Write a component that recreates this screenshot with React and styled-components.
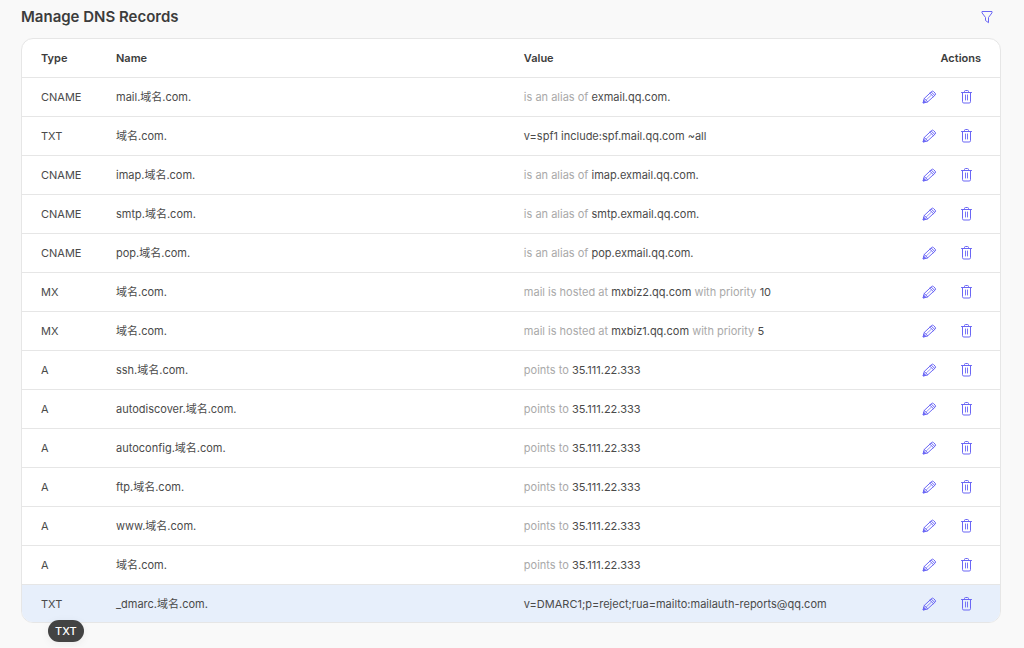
import React from "react";
import styled, { createGlobalStyle } from "styled-components";

const GlobalStyle = createGlobalStyle`
  *, *::before, *::after { box-sizing: border-box; }
  body {
    margin: 0;
    background: #f9f9f9;
    color: #4a4a4a;
    font-family: Inter, "Noto Sans CJK SC", sans-serif;
    font-size: 11px;
    line-height: 18px;
  }
`;

const Page = styled.main`
  padding: 5px 23px 24px 21px;
`;

const Header = styled.header`
  display: flex;
  align-items: center;
  justify-content: space-between;
  height: 24px;
  margin-bottom: 9px;
  padding-right: 6px;
`;

const Title = styled.h1`
  margin: 0;
  color: #3c3c3c;
  font-size: 15px;
  line-height: 24px;
  font-weight: 600;
`;

const IconButton = styled.button`
  display: inline-flex;
  align-items: center;
  justify-content: center;
  width: 16px;
  height: 16px;
  padding: 0;
  border: 0;
  background: transparent;
  color: #6a66f5;
  cursor: pointer;
`;

const Panel = styled.section`
  position: relative;
`;

const Card = styled.div`
  overflow: hidden;
  border: 1px solid #e6e6e6;
  border-radius: 12px;
  background: #fff;
`;

const Table = styled.table`
  width: 100%;
  table-layout: fixed;
  border-collapse: separate;
  border-spacing: 0;
`;

const TypeColumn = styled.col`
  width: 94px;
`;

const NameColumn = styled.col`
  width: 41.7%;
`;

const ActionsColumn = styled.col`
  width: 104px;
`;

const HeadCell = styled.th`
  height: 39px;
  padding: 0;
  border-bottom: 1px solid #e6e6e6;
  color: #3c3c3c;
  font-weight: 600;
  text-align: ${(p) => p.$align || "left"};

  &:first-child { padding-left: 19px; }
  &:last-child { padding-right: 19px; }
`;

const Row = styled.tr`
  background: ${(p) => (p.$active ? "#e7effb" : "#fff")};

  &:last-child > td {
    height: 37px;
    border-bottom: 0;
  }
`;

const Cell = styled.td`
  height: 39px;
  padding: 0;
  border-bottom: 1px solid #e6e6e6;
  white-space: nowrap;

  &:first-child { padding-left: 19px; }
`;

const Muted = styled.span`
  color: #a9a9a9;
`;

const Actions = styled.div`
  display: flex;
  justify-content: flex-end;
  gap: 21px;
  padding-right: 26px;
`;

const Tooltip = styled.div`
  position: absolute;
  top: calc(100% - 3px);
  left: 27px;
  padding: 2px 7px;
  border-radius: 11px;
  background: #434343;
  color: #fff;
  font-weight: 500;
  box-shadow: 0 2px 10px rgba(0, 0, 0, 0.06);
`;

function FilterIcon() {
  return (
    <svg width="16" height="16" viewBox="0 0 16 16" fill="none" stroke="currentColor" strokeLinejoin="round" aria-hidden="true">
      <path d="M3 2.500h10v1.300L9.500 8.500v5.200L6.500 11.500v-3L3 3.800z" />
    </svg>
  );
}

function PencilIcon() {
  return (
    <svg width="16" height="16" viewBox="0 0 16 16" fill="none" stroke="currentColor" strokeLinejoin="round" strokeLinecap="round" aria-hidden="true">
      <path d="M2.200 13.600l1-4.100 7.400-6.900a1.400 1.400 0 0 1 2 0l1.500 1.500a1.400 1.400 0 0 1 0 2l-7.400 6.700z" />
      <path d="M8.900 4.200l3.600 3.500M10.200 3l3.600 3.500M3.200 9.500l3.500 3.300" />
      <path d="M5.400 10.800l4.700-4.400" strokeWidth="0.700" />
      <path d="M2.200 13.600l.6-2.300 1.700 1.700z" fill="currentColor" />
    </svg>
  );
}

function TrashIcon() {
  return (
    <svg width="16" height="16" viewBox="0 0 16 16" fill="none" stroke="currentColor" strokeLinejoin="round" strokeLinecap="round" aria-hidden="true">
      <path d="M3.500 3.500h10M6.500 3.300V2.500a1 1 0 0 1 1-1h2a1 1 0 0 1 1 1v.8M4.500 3.700v9a1.300 1.300 0 0 0 1.300 1.300h5.400a1.300 1.300 0 0 0 1.300-1.300V3.700" />
      <path d="M7.500 6v5M9.500 6v5" strokeWidth="0.900" />
    </svg>
  );
}

const alias = (target) => (
  <>
    <Muted>is an alias of</Muted> {target}
  </>
);

const mail = (host, priority) => (
  <>
    <Muted>mail is hosted at</Muted> {host} <Muted>with priority</Muted> {priority}
  </>
);

const address = (ip) => (
  <>
    <Muted>points to</Muted> {ip}
  </>
);

const records = [
  { type: "CNAME", name: "mail.域名.com.", value: alias("exmail.qq.com.") },
  { type: "TXT", name: "域名.com.", value: "v=spf1 include:spf.mail.qq.com ~all" },
  { type: "CNAME", name: "imap.域名.com.", value: alias("imap.exmail.qq.com.") },
  { type: "CNAME", name: "smtp.域名.com.", value: alias("smtp.exmail.qq.com.") },
  { type: "CNAME", name: "pop.域名.com.", value: alias("pop.exmail.qq.com.") },
  { type: "MX", name: "域名.com.", value: mail("mxbiz2.qq.com", 10) },
  { type: "MX", name: "域名.com.", value: mail("mxbiz1.qq.com", 5) },
  { type: "A", name: "ssh.域名.com.", value: address("35.111.22.333") },
  { type: "A", name: "autodiscover.域名.com.", value: address("35.111.22.333") },
  { type: "A", name: "autoconfig.域名.com.", value: address("35.111.22.333") },
  { type: "A", name: "ftp.域名.com.", value: address("35.111.22.333") },
  { type: "A", name: "www.域名.com.", value: address("35.111.22.333") },
  { type: "A", name: "域名.com.", value: address("35.111.22.333") },
  {
    type: "TXT",
    name: "_dmarc.域名.com.",
    value: "v=DMARC1;p=reject;rua=mailto:mailauth-reports@qq.com",
    active: true,
  },
];

export default function App() {
  return (
    <>
      <GlobalStyle />
      <Page>
        <Header>
          <Title>Manage DNS Records</Title>
          <IconButton type="button" aria-label="Filter records">
            <FilterIcon />
          </IconButton>
        </Header>
        <Panel>
          <Card>
            <Table>
              <colgroup>
                <TypeColumn />
                <NameColumn />
                <col />
                <ActionsColumn />
              </colgroup>
              <thead>
                <tr>
                  <HeadCell scope="col">Type</HeadCell>
                  <HeadCell scope="col">Name</HeadCell>
                  <HeadCell scope="col">Value</HeadCell>
                  <HeadCell scope="col" $align="right">Actions</HeadCell>
                </tr>
              </thead>
              <tbody>
                {records.map((record, index) => (
                  <Row key={index} $active={record.active}>
                    <Cell>{record.type}</Cell>
                    <Cell>{record.name}</Cell>
                    <Cell>{record.value}</Cell>
                    <Cell>
                      <Actions>
                        <IconButton type="button" aria-label={`Edit ${record.name}`}>
                          <PencilIcon />
                        </IconButton>
                        <IconButton type="button" aria-label={`Delete ${record.name}`}>
                          <TrashIcon />
                        </IconButton>
                      </Actions>
                    </Cell>
                  </Row>
                ))}
              </tbody>
            </Table>
          </Card>
          <Tooltip role="tooltip">TXT</Tooltip>
        </Panel>
      </Page>
    </>
  );
}
